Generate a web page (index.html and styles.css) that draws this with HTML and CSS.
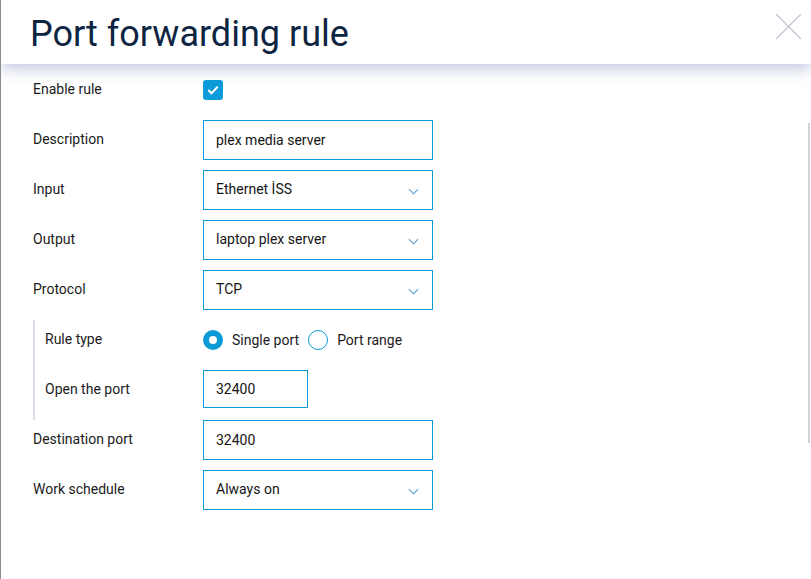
FILE: index.html
```html
<!DOCTYPE html>
<html lang="en">
<head>
    <meta charset="UTF-8">
    <meta name="viewport" content="width=device-width, initial-scale=1.0">
    <title>Port forwarding rule</title>
    <link rel="stylesheet" href="styles.css">
</head>
<body>
    <div class="dialog">
        <div class="dialog-header">
            <h1>Port forwarding rule</h1>
            <button class="close-btn" aria-label="Close">
                <svg width="27" height="27" viewBox="0 0 27 27"><path d="M1 1 L26 26 M26 1 L1 26" stroke="#c4c7d1" stroke-width="1.3" fill="none"/></svg>
            </button>
        </div>

        <form class="rule-form">
            <div class="row">
                <label class="label">Enable rule</label>
                <span class="checkbox">
                    <svg width="12" height="10" viewBox="0 0 12 10"><path d="M1.3 5 L4.5 8.2 L10.7 1.8" stroke="#fff" stroke-width="2" fill="none"/></svg>
                </span>
            </div>
            <div class="row">
                <label class="label">Description</label>
                <div class="field">plex media server</div>
            </div>
            <div class="row">
                <label class="label">Input</label>
                <div class="field select">Ethernet İSS <span class="chevron"></span></div>
            </div>
            <div class="row">
                <label class="label">Output</label>
                <div class="field select">laptop plex server <span class="chevron"></span></div>
            </div>
            <div class="row">
                <label class="label">Protocol</label>
                <div class="field select">TCP <span class="chevron"></span></div>
            </div>

            <div class="group">
                <div class="row">
                    <label class="label">Rule type</label>
                    <div class="radios">
                        <span class="radio checked"></span><span class="radio-text">Single port</span>
                        <span class="radio"></span><span class="radio-text">Port range</span>
                    </div>
                </div>
                <div class="row">
                    <label class="label">Open the port</label>
                    <div class="field short">32400</div>
                </div>
            </div>

            <div class="row">
                <label class="label">Destination port</label>
                <div class="field">32400</div>
            </div>
            <div class="row">
                <label class="label">Work schedule</label>
                <div class="field select">Always on <span class="chevron"></span></div>
            </div>
        </form>

        <div class="scroll-thumb"></div>
    </div>
</body>
</html>
```

FILE: styles.css
```css
body {
    margin: 0;
    font-family: Roboto, "Liberation Sans", Arial, sans-serif;
    background: #fff;
    color: #1b1b1b;
}
.dialog {
    position: relative;
    height: 579px;
    border-left: 1px solid #8c8c8c;
    overflow: hidden;
}
.dialog-header {
    height: 64px;
    padding-left: 29px;
    background: #fff;
    box-shadow: 0 5px 14px rgba(95, 115, 180, 0.38);
    position: relative;
    z-index: 1;
}
.dialog-header h1 {
    margin: 0;
    padding-top: 13px;
    font-size: 36px;
    font-weight: 400;
    color: #0e2542;
}
.close-btn {
    position: absolute;
    top: 13px;
    right: 9px;
    padding: 0;
    border: none;
    background: none;
    cursor: pointer;
}
.rule-form {
    padding: 6px 0 0 32px;
}
.row {
    display: flex;
    align-items: center;
    height: 40px;
    margin-bottom: 10px;
    font-size: 14px;
}
.label {
    width: 170px;
    flex-shrink: 0;
    color: #1b1b1b;
    padding-bottom: 2px;
}
.group {
    border-left: 2px solid #d9dce5;
    padding-left: 10px;
    padding-bottom: 10px;
}
.group .row:last-child {
    margin-bottom: 0;
}
.group .label {
    width: 158px;
}
.checkbox {
    width: 20px;
    height: 20px;
    border-radius: 3px;
    background: #0a9bd8;
    display: flex;
    align-items: center;
    justify-content: center;
}
.field {
    width: 230px;
    height: 40px;
    box-sizing: border-box;
    border: 1px solid #0b9ad6;
    padding: 0 12px;
    display: flex;
    align-items: center;
    position: relative;
    color: #151515;
}
.field.select {
    padding-bottom: 3px;
}
.field.short {
    width: 105px;
    height: 38px;
    align-self: flex-start;
}
.chevron {
    position: absolute;
    right: 15px;
    top: 15px;
    width: 6px;
    height: 6px;
    border-right: 1.4px solid #5a9ccf;
    border-bottom: 1.4px solid #5a9ccf;
    transform: rotate(45deg);
}
.radios {
    display: flex;
    align-items: center;
}
.radio {
    width: 20px;
    height: 20px;
    box-sizing: border-box;
    border-radius: 50%;
    border: 1.5px solid #0b9ad6;
    background: #fff;
}
.radio.checked {
    border: 6px solid #0b9ad6;
}
.radio-text {
    margin: 0 9px;
}
.scroll-thumb {
    position: absolute;
    right: 1px;
    top: 123px;
    width: 2px;
    height: 320px;
    background: #d3d3d3;
}
```
